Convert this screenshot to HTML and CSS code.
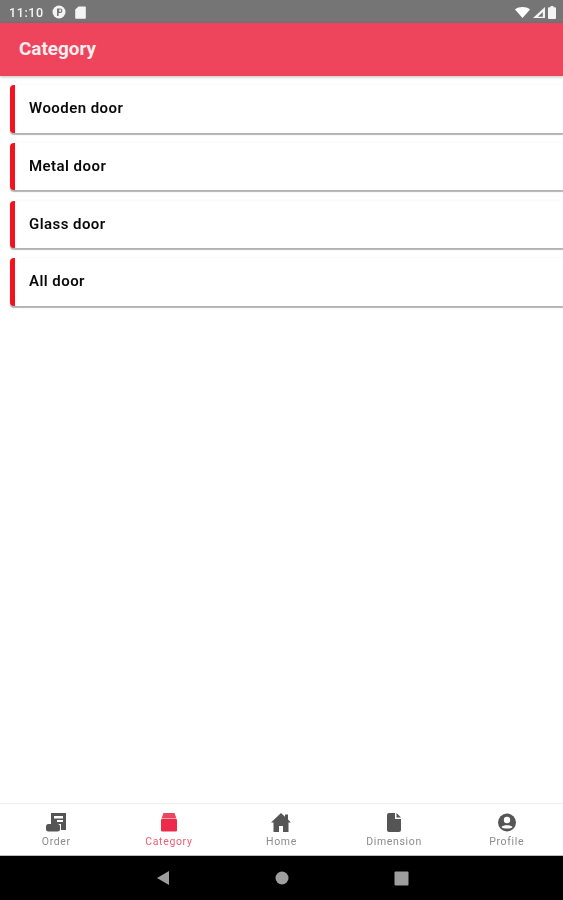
FILE: index.html
```html
<!DOCTYPE html>
<html lang="en">
<head>
<meta charset="utf-8">
<title>Category</title>
<link rel="stylesheet" href="styles.css">
</head>
<body>
<div class="screen">
  <div class="status">
    <span class="time">11:10</span>
    <svg class="st-icon" width="14" height="14" viewBox="0 0 14 14"><circle cx="7" cy="7" r="6.5" fill="#f4f4f4"/><path d="M5 3.500h3.200a2.200 2.200 0 0 1 0 4.400H6.600V11H5z" fill="#757575"/><path d="M7.200 4.600v2.200h1a1.100 1.100 0 0 0 0-2.200z" fill="#f4f4f4"/></svg>
    <svg class="st-icon st-sd" width="11" height="13" viewBox="0 0 11 13"><path d="M3.500 0.500H10a.8.8 0 0 1 .8.8v10.600a.8.8 0 0 1-.8.8H1a.8.8 0 0 1-.8-.8V3.600z" fill="#f4f4f4"/></svg>
    <span class="st-right">
      <svg width="15" height="11" viewBox="0 0 15 11"><path d="M0 2.400C4.200-.8 10.800-.8 15 2.400L7.500 11z" fill="#fff"/></svg>
      <svg width="12" height="11" viewBox="0 0 12 11"><path d="M12 0v11H0z" fill="#f4f4f4"/><path d="M9.800 5v4.800H5z" fill="#757575"/></svg>
      <svg width="8" height="13" viewBox="0 0 8 13"><path d="M2.500 0h3v1.300H7a1 1 0 0 1 1 1V12a1 1 0 0 1-1 1H1a1 1 0 0 1-1-1V2.300a1 1 0 0 1 1-1h1.500z" fill="#f4f4f4"/></svg>
    </span>
  </div>
  <header class="appbar">Category</header>
  <main class="list">
    <div class="card">Wooden door</div>
    <div class="card">Metal door</div>
    <div class="card">Glass door</div>
    <div class="card">All door</div>
  </main>
  <nav class="tabs">
    <div class="tab">
      <svg width="22" height="19" viewBox="0 0 22 19"><path d="M6 0h15v17h-5v-6H6z" fill="#555"/><path d="M9 3h9v2.500H9zM12 7h6v2h-6z" fill="#fff"/><rect x="1" y="11" width="14" height="7.500" rx="2.500" fill="#555"/></svg>
      <span>Order</span>
    </div>
    <div class="tab active">
      <svg width="20" height="19" viewBox="0 0 20 19"><path d="M4.500 0h11l2 5.500h-15z" fill="#e8475f"/><rect x="2" y="6" width="16" height="12.500" rx="1" fill="#ee2a4a"/></svg>
      <span>Category</span>
    </div>
    <div class="tab">
      <svg width="22" height="19" viewBox="0 0 22 19"><path d="M11 0L1 9.500h2.500V19H9v-6h4v6h5.500V9.500H21l-3-2.900V1.500h-3v2.300z" fill="#555"/></svg>
      <span>Home</span>
    </div>
    <div class="tab">
      <svg width="20" height="19" viewBox="0 0 20 19"><path d="M5 0h6v6h6v11a2 2 0 0 1-2 2H5a2 2 0 0 1-2-2V2a2 2 0 0 1 2-2z" fill="#555"/><path d="M12.500 0l4.500 4.500h-4.500z" fill="#555"/></svg>
      <span>Dimension</span>
    </div>
    <div class="tab">
      <svg width="20" height="19" viewBox="0 0 20 19"><circle cx="10" cy="9.500" r="9" fill="#555"/><circle cx="10" cy="7" r="3.200" fill="#fff"/><path d="M4.500 14c1.500-2.400 9.500-2.400 11 0-1.500 2-9.500 2-11 0z" fill="#fff"/></svg>
      <span>Profile</span>
    </div>
  </nav>
  <div class="sysnav">
    <svg width="14" height="16" viewBox="0 0 14 16"><path d="M13 1v14L1 8z" fill="#9e9e9e"/></svg>
    <svg width="14" height="14" viewBox="0 0 14 14"><circle cx="7" cy="7" r="6.500" fill="#9e9e9e"/></svg>
    <svg width="15" height="15" viewBox="0 0 15 15"><rect x="0.500" y="0.500" width="14" height="14" rx="1" fill="#9e9e9e"/></svg>
  </div>
</div>
</body>
</html>
```
FILE: styles.css
```css
* { box-sizing: border-box; }
html, body { margin: 0; padding: 0; }
body { background: #fff; font-family: Roboto, "Liberation Sans", sans-serif; }
.screen { width: 563px; height: 900px; display: flex; flex-direction: column; overflow: hidden; }
.status { height: 23px; flex: none; background: #757575; color: #f4f4f4; display: flex; align-items: center; padding: 1px 7px 0 9px; font-size: 12.500px; letter-spacing: .6px; font-weight: 500; }
.time { margin-right: 8px; filter: blur(.4px); }
.st-icon { margin-right: 8px; filter: blur(.4px); }
.st-sd { margin-left: 1px; }
.st-right { margin-left: auto; display: flex; align-items: center; gap: 3px; filter: blur(.4px); }
.appbar { height: 53px; flex: none; background: #ee455c; color: #fbeef0; font-size: 18.900px; font-weight: 700; display: flex; align-items: center; padding: 0 0 2px 19px; box-shadow: 0 1px 3px rgba(0,0,0,.25); position: relative; }
.list { flex: 1; display: flex; flex-direction: column; gap: 10.200px; padding: 9px 0 0 10px; }
.card { height: 47.600px; background: #fff; border-left: 5px solid #f4121f; border-radius: 4px 0 0 4px; box-shadow: 0 -1px 2px rgba(0,0,0,.03), 0 1.500px 1px rgba(0,0,0,.3); display: flex; align-items: center; padding: 0 0 1.500px 14px; font-size: 15px; font-weight: 600; color: #0a0a0a; letter-spacing: .45px; filter: blur(.4px); }
.tabs { height: 53px; flex: none; display: grid; grid-template-columns: repeat(5, 1fr); border-top: 1px solid #f0f0f0; border-bottom: 1px solid #bdbdbd; background: #fff; padding-top: 9px; }
.tab { display: flex; flex-direction: column; align-items: center; gap: 3px; font-size: 10.500px; letter-spacing: .65px; color: #8c8c8c; filter: blur(.4px); }
.tab svg { flex: none; }
.tab.active { color: #ef5e74; }
.sysnav { height: 44px; flex: none; background: #000; display: flex; align-items: center; justify-content: center; gap: 105px; padding-left: 2px; filter: blur(.3px); }
```
